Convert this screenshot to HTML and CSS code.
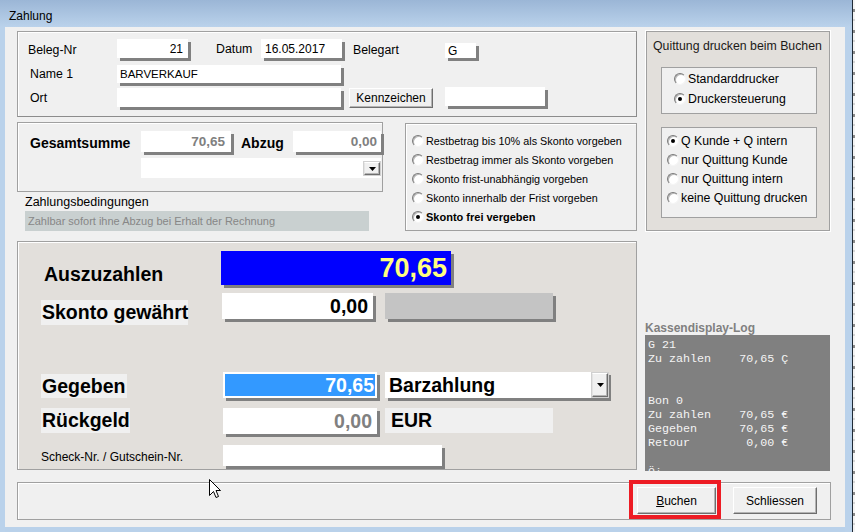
FILE: index.html
```html
<!DOCTYPE html>
<html lang="de">
<head>
<meta charset="utf-8">
<title>Zahlung</title>
<link rel="stylesheet" href="styles.css">
</head>
<body>
<div class="screen">
  <div class="window">
    <div class="titlebar">Zahlung</div>
    <div class="frame">
      <div class="frame-side"></div>
      <div class="client">
        <div class="main">
          <div class="leftcol">
            <div class="topgroup">
              <div class="tg-row r1">
                <span class="lbl l-beleg">Beleg-Nr</span>
                <div class="tb num f-beleg">21</div>
                <span class="lbl l-datum">Datum</span>
                <div class="tb f-datum">16.05.2017</div>
                <span class="lbl l-belegart">Belegart</span>
                <div class="tb f-g">G</div>
              </div>
              <div class="tg-row r2">
                <span class="lbl l-name">Name 1</span>
                <div class="tb f-name">BARVERKAUF</div>
              </div>
              <div class="tg-row r3">
                <span class="lbl l-ort">Ort</span>
                <div class="tb f-ort"></div>
                <button class="btn b-kenn">Kennzeichen</button>
                <div class="tb f-kenn"></div>
              </div>
            </div>

            <div class="midrow">
              <div class="gesamtcol">
                <div class="gesamt">
                  <div class="gs-row">
                    <span class="blbl l-gesamt">Gesamtsumme</span>
                    <div class="tb num grayval f-gesamt">70,65</div>
                    <span class="blbl l-abzug">Abzug</span>
                    <div class="tb num grayval f-abzug">0,00</div>
                  </div>
                  <div class="combo-small">
                    <span class="ddbtn dd-small"><svg width="7" height="4" viewBox="0 0 7 4"><path d="M0 0h7L3.5 4z" fill="#000"/></svg></span>
                  </div>
                </div>
                <div class="zb-label">Zahlungsbedingungen</div>
                <div class="zb-field">Zahlbar sofort ihne Abzug bei Erhalt der Rechnung</div>
              </div>
              <div class="skonto">
                <div class="rrow"><span class="rb"></span>Restbetrag bis 10% als Skonto vorgeben</div>
                <div class="rrow"><span class="rb"></span>Restbetrag immer als Skonto vorgeben</div>
                <div class="rrow"><span class="rb"></span>Skonto frist-unabhängig vorgeben</div>
                <div class="rrow"><span class="rb"></span>Skonto innerhalb der Frist vorgeben</div>
                <div class="rrow strong"><span class="rb on"></span>Skonto frei vergeben</div>
              </div>
            </div>

            <div class="bigpanel">
              <div class="bp-row row-a">
                <span class="big-lbl l-ausz">Auszuzahlen</span>
                <div class="bigtb blue">70,65</div>
              </div>
              <div class="bp-row row-b">
                <span class="big-lbl lbg l-skonto">Skonto gewährt</span>
                <div class="bigtb f-skonto">0,00</div>
                <div class="graybox"></div>
              </div>
              <div class="bp-row row-c">
                <span class="big-lbl lbg l-geg">Gegeben</span>
                <div class="bigtb f-geg">70,65</div>
                <div class="bigtb combo-big">Barzahlung<span class="ddbtn dd-big"><svg width="7" height="4" viewBox="0 0 7 4"><path d="M0 0h7L3.5 4z" fill="#000"/></svg></span></div>
              </div>
              <div class="bp-row row-d">
                <span class="big-lbl lbg l-rueck">Rückgeld</span>
                <div class="bigtb f-rueck">0,00</div>
                <div class="eur">EUR</div>
              </div>
              <div class="bp-row row-e">
                <span class="l-scheck">Scheck-Nr. / Gutschein-Nr.</span>
                <div class="tb f-scheck"></div>
              </div>
            </div>
          </div>

          <div class="rightcol">
            <div class="quittung">
              <div class="q-title">Quittung drucken beim Buchen</div>
              <div class="q-box q1">
                <div class="qrow"><span class="rb"></span>Standarddrucker</div>
                <div class="qrow"><span class="rb on"></span>Druckersteuerung</div>
              </div>
              <div class="q-box q2">
                <div class="qrow"><span class="rb on"></span>Q Kunde + Q intern</div>
                <div class="qrow"><span class="rb"></span>nur Quittung Kunde</div>
                <div class="qrow"><span class="rb"></span>nur Quittung intern</div>
                <div class="qrow"><span class="rb"></span>keine Quittung drucken</div>
              </div>
            </div>
            <div class="log-label">Kassendisplay-Log</div>
<pre class="log">G 21
Zu zahlen    70,65 Ç


Bon 0
Zu zahlen    70,65 €
Gegeben      70,65 €
Retour        0,00 €

ö¡</pre>
          </div>
        </div>

        <div class="bottombar">
          <div class="buchen-wrap">
            <button class="btn b-buchen"><u>B</u>uchen</button>
            <span class="highlight"></span>
          </div>
          <button class="btn b-schliessen">Schliessen</button>
        </div>

        <svg class="cursor" width="12" height="19" viewBox="0 0 12 19"><path d="M0.5 0.5V16.5L4.5 12.5L7 18.5L9.5 17.5L7 11.5H11.5Z" fill="#fff" stroke="#000" stroke-width="1" stroke-linejoin="miter"/></svg>
      </div>
      <div class="frame-side right"></div>
    </div>
  </div>
  <div class="edge"></div>
  <div class="behind"></div>
</div>
</body>
</html>
```

FILE: styles.css
```css
* { box-sizing: border-box; }

html, body {
  margin: 0;
  padding: 0;
}

body {
  width: 855px;
  height: 532px;
  overflow: hidden;
  background: #b9d1ea;
  font-family: "Liberation Sans", Arial, sans-serif;
  color: #000;
}

.screen {
  display: flex;
  width: 855px;
  height: 532px;
}

.window {
  width: 852px;
  height: 532px;
  display: flex;
  flex-direction: column;
  background: #b9d1ea;
}

.titlebar {
  height: 27px;
  padding: 9px 0 0 9px;
  font-size: 12px;
  line-height: 14px;
  background: linear-gradient(#9bb6d6, #bad2eb);
}

.frame {
  display: flex;
  height: 505px;
}

.frame-side {
  width: 5px;
  background: #bad2eb;
}

.frame-side.right {
  width: 7px;
}

.edge {
  width: 1px;
  background: #1f2a36;
}

.behind {
  width: 2px;
  background: repeating-linear-gradient(#f4f4f4 0 9px, #8a8a8a 9px 12px, #f4f4f4 12px 19px, #d6d6d6 19px 21px);
}

.client {
  position: relative;
  width: 840px;
  height: 500px;
  background: #f0f0f0;
  padding: 4px 0 0 12px;
}

.main {
  display: flex;
}

.leftcol {
  width: 620px;
  display: flex;
  flex-direction: column;
}

.rightcol {
  width: 185px;
  margin-left: 8px;
  display: flex;
  flex-direction: column;
}

/* generic controls */
.lbl {
  font-size: 12.3px;
  line-height: 14px;
}

.tb {
  background: #fff;
  box-shadow: 3px 3px 0 #808080;
  display: flex;
  align-items: center;
  padding: 0 4px;
  font-size: 12px;
  white-space: nowrap;
}

.num {
  justify-content: flex-end;
  padding-right: 5px;
}

.btn {
  font-family: "Liberation Sans", Arial, sans-serif;
  font-size: 12px;
  color: #000;
  background: #f0f0f0;
  border: 1px solid;
  border-color: #ffffff #6e6e6e #6e6e6e #ffffff;
  box-shadow: inset -1px -1px 0 #b4b4b4;
  padding: 0;
  margin: 0;
}

/* top group */
.topgroup {
  height: 86px;
  border: 1px solid #a0a0a0;
  border-right-color: #8c8c8c;
  border-bottom-color: #8c8c8c;
  box-shadow: inset 1px 1px 0 #fff;
}

.tg-row {
  display: flex;
  align-items: center;
}

.r1 { height: 19px; margin-top: 7px; }
.r2 { height: 18px; margin-top: 7px; }
.r3 { height: 20px; margin-top: 5px; }

.l-beleg { margin-left: 10px; width: 89px; padding-top: 3px; }
.f-beleg { width: 71px; height: 19px; }
.l-datum { margin-left: 28px; width: 45px; }
.f-datum { width: 81px; height: 19px; }
.l-belegart { margin-left: 11px; width: 92px; padding-top: 3px; }
.f-g { width: 31px; height: 15px; align-self: flex-end; padding-left: 3px; }

.l-name { margin-left: 12px; width: 87px; }
.f-name { width: 224px; height: 18px; padding-left: 3px; font-size: 11.5px; }

.l-ort { margin-left: 12px; width: 87px; }
.f-ort { width: 224px; height: 19px; align-self: flex-start; }
.b-kenn { margin-left: 8px; width: 84px; height: 20px; }
.f-kenn { margin-left: 12px; width: 100px; height: 19px; align-self: flex-start; margin-top: -1px; }

/* middle row */
.midrow {
  display: flex;
  margin-top: 5px;
}

.gesamtcol {
  width: 366px;
  display: flex;
  flex-direction: column;
}

.gesamt {
  height: 70px;
  border: 1px solid #a0a0a0;
  box-shadow: inset 1px 1px 0 #fff;
}

.gs-row {
  display: flex;
  align-items: center;
  height: 21px;
  margin-top: 8px;
}

.blbl {
  font-size: 14px;
  font-weight: bold;
  line-height: 16px;
  padding-top: 2px;
}

.l-gesamt { margin-left: 12px; width: 111px; }
.l-abzug { margin-left: 10px; width: 52px; }

.grayval {
  color: #808080;
  font-weight: bold;
  font-size: 13.5px;
}

.f-gesamt { width: 90px; height: 21px; padding-right: 6px; }
.f-abzug { width: 88px; height: 21px; padding-right: 4px; }

.combo-small {
  margin: 6px 0 0 123px;
  width: 240px;
  height: 20px;
  background: #fff;
  display: flex;
  justify-content: flex-end;
  align-items: flex-start;
  padding: 4px 1px 0 0;
}

.ddbtn {
  display: flex;
  align-items: center;
  justify-content: center;
  background: #f0f0f0;
  border: 1px solid;
  border-color: #ffffff #6e6e6e #6e6e6e #e3e3e3;
  box-shadow: inset -1px -1px 0 #b4b4b4, 0 0 0 1px #d0d0d0;
}

.dd-small { width: 16px; height: 13px; }

.zb-label {
  margin: 4px 0 0 8px;
  height: 13px;
  font-size: 12.5px;
  line-height: 13px;
}

.zb-field {
  margin: 2px 0 0 8px;
  width: 344px;
  height: 20px;
  background: #c9d0d0;
  color: #878787;
  font-size: 11px;
  line-height: 20px;
  padding-left: 3px;
  white-space: nowrap;
}

.skonto {
  margin: 1px 0 0 22px;
  width: 232px;
  height: 108px;
  border: 1px solid #a0a0a0;
  box-shadow: inset 1px 1px 0 #fff;
  padding: 7px 0 0 6px;
  font-size: 10.8px;
}

.rrow {
  display: flex;
  align-items: center;
  height: 19px;
  white-space: nowrap;
}

.rrow.strong {
  font-weight: bold;
  font-size: 11px;
}

.rb {
  position: relative;
  flex: none;
  width: 12px;
  height: 12px;
  margin-right: 2px;
  border-radius: 50%;
  border: 1px solid;
  border-color: #7a7a7a #f4f4f4 #f4f4f4 #7a7a7a;
  background: #fff;
  box-shadow: inset 1px 1px 0 #b8b8b8;
}

.rb.on::after {
  content: "";
  position: absolute;
  left: 3px;
  top: 3px;
  width: 4px;
  height: 4px;
  border-radius: 50%;
  background: #000;
}

/* big panel */
.bigpanel {
  margin-top: 10px;
  height: 229px;
  background: #e2dfdb;
  border: 1px solid #a0a0a0;
  box-shadow: inset 1px 1px 0 #fff;
}

.bp-row {
  display: flex;
  align-items: flex-start;
}

.big-lbl {
  font-size: 19.5px;
  font-weight: bold;
  white-space: nowrap;
  display: flex;
  align-items: center;
}

.lbg {
  background: #f0f0f0;
  padding-left: 1px;
}

.bigtb {
  background: #fff;
  box-shadow: 3px 3px 0 #808080;
  font-size: 19.5px;
  font-weight: bold;
  display: flex;
  align-items: center;
  justify-content: flex-end;
  padding-right: 5px;
  white-space: nowrap;
}

.row-a { margin-top: 9px; height: 34px; }
.l-ausz { margin: 12px 0 0 26px; width: 177px; height: 22px; }
.blue {
  width: 230px;
  height: 34px;
  background: #0000ff;
  color: #ffff80;
  font-size: 27px;
  padding-right: 4px;
}

.row-b { margin-top: 8px; height: 32px; }
.l-skonto { margin: 7px 0 0 23px; width: 147px; height: 25px; }
.f-skonto { margin-left: 34px; width: 151px; height: 26px; }
.graybox {
  margin-left: 12px;
  width: 168px;
  height: 26px;
  background: #c4c4c4;
  box-shadow: 3px 3px 0 #808080;
}

.row-c { margin-top: 47px; height: 26px; }
.l-geg { margin: 2px 0 0 23px; width: 86px; height: 24px; }
.f-geg {
  margin-left: 96px;
  width: 154px;
  height: 26px;
  border: 2px solid #fff;
  background: #3399ff;
  color: #fff;
  padding-right: 1px;
}
.combo-big {
  margin-left: 8px;
  width: 223px;
  height: 26px;
  justify-content: space-between;
  padding: 0 0 0 4px;
}
.dd-big { width: 16px; height: 24px; align-self: center; }

.row-d { margin-top: 10px; height: 26px; }
.l-rueck { width: 89px; height: 25px; margin-left: 23px; }
.f-rueck { margin-left: 93px; width: 154px; height: 26px; color: #808080; }
.eur {
  margin-left: 8px;
  width: 168px;
  height: 25px;
  background: #f0f0f0;
  font-size: 19.5px;
  font-weight: bold;
  line-height: 25px;
  padding-left: 6px;
}

.row-e { margin-top: 11px; height: 21px; align-items: center; }
.l-scheck {
  margin-left: 23px;
  width: 182px;
  font-size: 12px;
  padding-top: 3px;
  white-space: nowrap;
}
.f-scheck { width: 219px; height: 21px; }

/* right column */
.quittung {
  margin-left: 1px;
  width: 184px;
  height: 200px;
  background: #e2dfdb;
  border: 1px solid #a0a0a0;
  box-shadow: 0 0 0 1px #fff;
}

.q-title {
  margin: 7px 0 0 6px;
  font-size: 12.3px;
  line-height: 14px;
  color: #1c1a18;
  white-space: nowrap;
}

.q-box {
  margin-left: 14px;
  width: 156px;
  background: #f0f0f0;
  border: 1px solid #a0a0a0;
  font-size: 12.3px;
}

.q1 { margin-top: 14px; height: 47px; padding: 1px 0 0 12px; }
.q1 .qrow { height: 20px; }
.q2 { margin-top: 13px; height: 91px; padding: 3px 0 0 5px; }
.q2 .qrow { height: 19px; }

.qrow {
  display: flex;
  align-items: center;
  white-space: nowrap;
}

.log-label {
  margin-top: 90px;
  height: 14px;
  font-size: 12px;
  line-height: 14px;
  font-weight: bold;
  color: #808080;
}

.log {
  margin: 0;
  width: 185px;
  height: 136px;
  overflow: hidden;
  background: #808080;
  color: #f4f4f4;
  font-family: "Liberation Mono", "Courier New", monospace;
  font-size: 11.7px;
  line-height: 14px;
  padding: 3px 0 0 3px;
  white-space: pre;
}

/* bottom bar */
.bottombar {
  margin-top: 11px;
  width: 814px;
  height: 38px;
  border: 1px solid #a0a0a0;
  box-shadow: inset 1px 1px 0 #fff;
  display: flex;
  justify-content: flex-end;
  align-items: flex-start;
  padding: 4px 13px 0 0;
}

.buchen-wrap {
  position: relative;
  display: flex;
}

.b-buchen { width: 79px; height: 27px; }
.b-schliessen { margin-left: 17px; width: 84px; height: 27px; }

.highlight {
  position: absolute;
  left: -8px;
  top: -7px;
  right: -5px;
  bottom: -5px;
  border: 4px solid #ed1c24;
  pointer-events: none;
}

.cursor {
  position: absolute;
  left: 204px;
  top: 452px;
}
```
